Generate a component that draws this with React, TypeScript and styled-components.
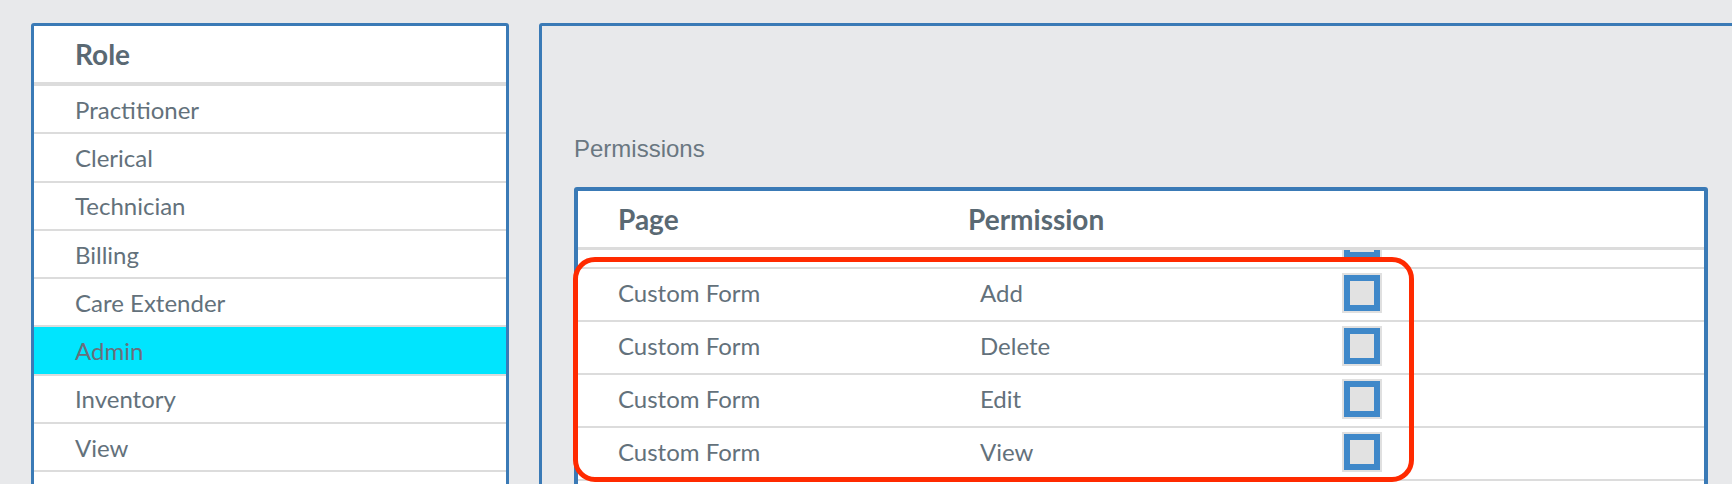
import React, { useLayoutEffect, useRef } from "react";
import styled, { createGlobalStyle } from "styled-components";

const Global = createGlobalStyle`
  html, body {
    margin: 0;
    padding: 0;
    background: #e8e9eb;
    height: 484px;
    overflow: hidden;
  }
  * { box-sizing: border-box; }
`;

const Page = styled.div`
  display: flex;
  align-items: flex-start;
  gap: 30px;
  padding: 23px 0 0 31px;
  width: 1800px;
  font-family: Lato, "Noto Sans", sans-serif;
`;

const RolePanel = styled.section`
  width: 478px;
  flex: none;
  height: 560px;
  background: #ffffff;
  border: 3px solid #3a7ab6;
  border-radius: 3px;
  overflow: hidden;
`;

const RoleHeader = styled.div`
  height: 60px;
  display: flex;
  align-items: center;
  padding-left: 41px;
  border-bottom: 4px solid #dcdcdc;
  font-size: 28px;
  font-weight: 700;
  color: #5a6973;
`;

const RoleRow = styled.div<{ $active?: boolean }>`
  height: 48.3px;
  display: flex;
  align-items: center;
  padding-left: 41px;
  border-bottom: 2px solid #dcdcdc;
  font-size: 24px;
  color: ${(p) => (p.$active ? "#6a6e7b" : "#63717b")};
  background: ${(p) => (p.$active ? "#00e5fe" : "#ffffff")};
`;

const MainPanel = styled.section`
  width: 1204px;
  flex: none;
  height: 560px;
  border: 3px solid #3a7ab6;
  border-radius: 3px;
  padding: 109px 32px 0 32px;
`;

const SectionLabel = styled.div`
  font-family: "Liberation Sans", Arial, sans-serif;
  font-size: 24px;
  line-height: 28px;
  color: #6a7781;
  margin-bottom: 24px;
`;

const Table = styled.div`
  position: relative;
  background: #ffffff;
  border: 4px solid #3a7ab6;
  border-radius: 3px;
  height: 400px;
`;

const HeaderRow = styled.div`
  display: grid;
  grid-template-columns: 350px 374px 1fr;
  align-items: center;
  height: 59px;
  padding-left: 40px;
  border-bottom: 3px solid #dcdcdc;
  font-size: 28px;
  font-weight: 700;
  color: #5a6973;
`;

const Body = styled.div`
  height: 300px;
  overflow: hidden;
`;

const Row = styled.div`
  display: grid;
  grid-template-columns: 350px 374px 1fr;
  align-items: center;
  height: 53px;
  padding: 0 0 4px 40px;
  border-bottom: 2px solid #dcdcdc;
  font-size: 24px;
  color: #63717b;
`;

const PermCell = styled.span`
  padding-left: 12px;
`;

const CheckFrame = styled.span`
  display: inline-flex;
  align-items: center;
  justify-content: center;
  width: 40px;
  height: 40px;
  border: 2px solid #e0e0e0;
  vertical-align: middle;
`;

const CheckBox = styled.span`
  display: block;
  width: 37px;
  height: 36px;
  border: 6px solid #3f88c9;
  background: #e2e2e2;
`;

const CheckCell = styled.span`
  display: flex;
  align-items: center;
`;

const Highlight = styled.div`
  position: absolute;
  left: -5px;
  top: 66px;
  width: 841px;
  height: 225px;
  border: 5px solid #ff2a00;
  border-radius: 22px;
  pointer-events: none;
`;

const roles = [
  "Practitioner",
  "Clerical",
  "Technician",
  "Billing",
  "Care Extender",
  "Admin",
  "Inventory",
  "View",
  "Reports",
];

const perms = [
  ["Custom Form", "Access"],
  ["Custom Form", "Add"],
  ["Custom Form", "Delete"],
  ["Custom Form", "Edit"],
  ["Custom Form", "View"],
  ["Dashboard", "Add"],
  ["Dashboard", "Delete"],
  ["Dashboard", "Edit"],
  ["Dashboard", "View"],
];

export default function App() {
  const bodyRef = useRef<HTMLDivElement>(null);
  useLayoutEffect(() => {
    if (bodyRef.current) bodyRef.current.scrollTop = 34;
  }, []);

  return (
    <>
      <Global />
      <Page>
        <RolePanel>
          <RoleHeader>Role</RoleHeader>
          {roles.map((r) => (
            <RoleRow key={r} $active={r === "Admin"}>
              {r}
            </RoleRow>
          ))}
        </RolePanel>
        <MainPanel>
          <SectionLabel>Permissions</SectionLabel>
          <Table>
            <HeaderRow>
              <span>Page</span>
              <span>Permission</span>
              <span />
            </HeaderRow>
            <Body ref={bodyRef}>
              {perms.map(([page, perm], i) => (
                <Row key={i}>
                  <span>{page}</span>
                  <PermCell>{perm}</PermCell>
                  <CheckCell>
                    <CheckFrame>
                      <CheckBox />
                    </CheckFrame>
                  </CheckCell>
                </Row>
              ))}
            </Body>
            <Highlight />
          </Table>
        </MainPanel>
      </Page>
    </>
  );
}
